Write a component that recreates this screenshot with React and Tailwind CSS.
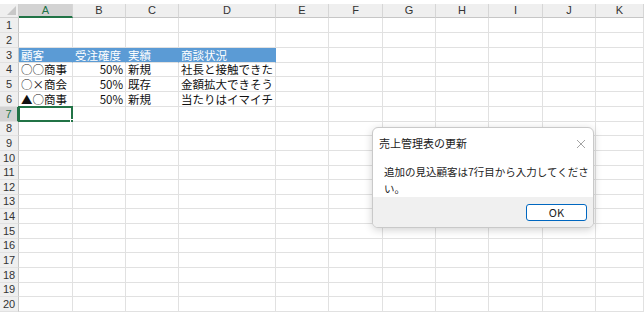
import React from 'react';

const cols = ['A', 'B', 'C', 'D', 'E', 'F', 'G', 'H', 'I', 'J', 'K'];

const data = {
    3: ['顧客', '受注確度', '実績', '商談状況'],
    4: ['○○商事', '50%', '新規', '社長と接触できた'],
    5: ['○×商会', '50%', '既存', '金額拡大できそう'],
    6: ['▲○商事', '50%', '新規', '当たりはイマイチ'],
};

// row heights alternate like Excel at this zoom level
const rowH = {
    4: 'h-[14px]', 8: 'h-[14px]', 11: 'h-[14px]', 13: 'h-[14px]', 16: 'h-[14px]', 19: 'h-[14px]',
};

const rows = Array.from({ length: 20 }, (_, i) => i + 1);

const Cell = ({ row, col }) => {
    const values = data[row];
    const value = values ? values[col] : null;
    const isHead = row === 3 && col < 4;
    const isSelected = row === 7 && col === 0;

    return (
        <div
            className={`relative ${rowH[row] || 'h-[15px]'} flex items-center border-r border-b border-[#e1e1e1] px-[2px] text-[11.5px] leading-[13px] whitespace-nowrap overflow-visible ${
                isHead ? 'bg-[#5b9bd5] text-white border-r-[#5b9bd5]' : 'bg-white text-[#111]'
            } ${col === 1 && !isHead ? 'justify-end' : ''}`}
        >
            {value}
            {isSelected && (
                <div className="absolute -left-px -top-px w-[55px] h-[16px] border-2 border-[#217346]">
                    <div className="absolute -right-[4px] -bottom-[4px] w-[5px] h-[5px] bg-[#217346] border border-white" />
                </div>
            )}
        </div>
    );
};

const App = () => {
    return (
        <div
            className="relative w-[644px] h-[314px] overflow-hidden bg-white"
            style={{ fontFamily: '"Noto Sans CJK JP", "Liberation Sans", sans-serif' }}
        >
            <div className="h-[4px] bg-white" />
            <div className="grid grid-cols-[19px_54px_53px_53px_97px_53px_54px_53px_53px_54px_53px_48px]">
                {/* Column headers */}
                <div className="relative h-[14px] bg-[#efefef] border-r border-b border-[#cfcfcf]">
                    <div className="absolute right-[2px] bottom-[2px] w-0 h-0 border-l-[9px] border-l-transparent border-b-[9px] border-b-[#c8c8c8]" />
                </div>
                {cols.map((c, i) => (
                    <div
                        key={c}
                        className={`h-[14px] flex items-center justify-center text-[11px] border-r border-[#d6d6d6] ${
                            i === 0
                                ? 'bg-[#d3d3d3] text-[#217346] border-b-2 border-b-[#217346]'
                                : 'bg-[#efefef] text-[#333] border-b border-b-[#c6c6c6]'
                        }`}
                        style={{ fontFamily: '"Liberation Sans", Arial, sans-serif' }}
                    >
                        {c}
                    </div>
                ))}

                {rows.map((r) => (
                    <React.Fragment key={r}>
                        <div
                            className={`${rowH[r] || 'h-[15px]'} flex items-center justify-center text-[11px] leading-[13px] border-b border-[#e1e1e1] border-r ${
                                r === 7
                                    ? 'bg-[#d3d3d3] text-[#217346] border-r-2 border-r-[#217346]'
                                    : 'bg-[#efefef] text-[#333] border-r-[#c6c6c6]'
                            }`}
                            style={{ fontFamily: '"Liberation Sans", Arial, sans-serif' }}
                        >
                            {r}
                        </div>
                        {cols.map((c, i) => (
                            <Cell key={c} row={r} col={i} />
                        ))}
                    </React.Fragment>
                ))}
            </div>

            {/* Message box */}
            <div className="absolute left-[372px] top-[127px] w-[222px] h-[101px] bg-white border border-[#c9c9c9] rounded-[6px] shadow-[0_2px_8px_rgba(0,0,0,0.18)] overflow-hidden flex flex-col">
                <div className="flex items-center justify-between pl-[6px] pr-[7px] pt-[6px] h-[24px]">
                    <span className="text-[11px] text-[#222]">売上管理表の更新</span>
                    <svg width="10" height="10" viewBox="0 0 10 10" className="mt-[1px]">
                        <path d="M1 1 L9 9 M9 1 L1 9" stroke="#9a9a9a" strokeWidth="0.9" fill="none" />
                    </svg>
                </div>
                <div className="flex-1 pl-[11px] pr-[2px] pt-[11px] text-[10.5px] leading-[17px] text-[#222]">
                    追加の見込顧客は7行目から入力してください。
                </div>
                <div className="h-[30px] bg-[#f0f0f0] flex items-center justify-end pr-[6px]">
                    <button className="w-[61px] h-[17px] bg-white border border-[#0067c0] rounded-[3px] text-[11px] text-[#222] leading-none">
                        OK
                    </button>
                </div>
            </div>
        </div>
    );
};

export default App;
